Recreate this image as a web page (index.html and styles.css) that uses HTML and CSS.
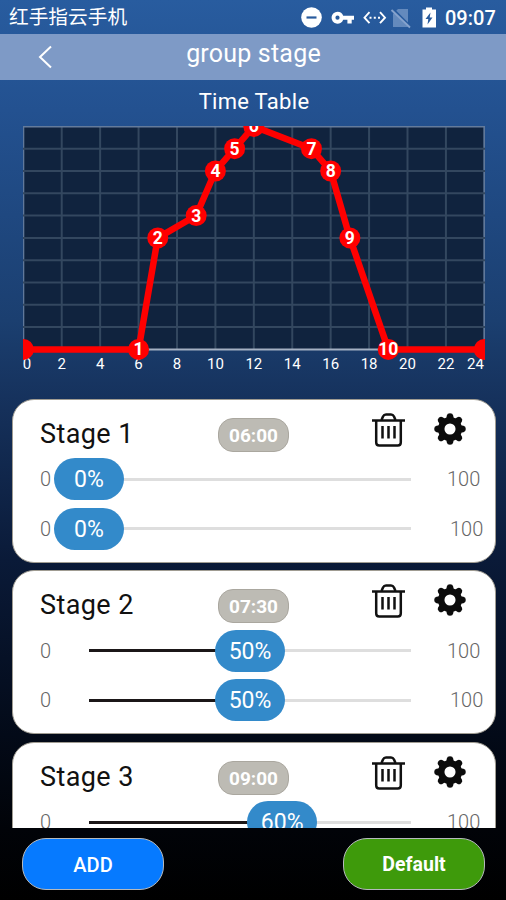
FILE: index.html
```html
<!DOCTYPE html>
<html lang="en">
<head>
  <meta charset="UTF-8">
  <title>group stage</title>
  <link rel="stylesheet" href="styles.css">
</head>
<body>

<div class="status">
  <span class="carrier" lang="zh">红手指云手机</span>
  <svg class="status-icons" width="138" height="24" viewBox="0 0 138 24">
    <circle cx="10.5" cy="11.5" r="10.3" fill="#fff"/>
    <path d="M5.5 11.5h10" stroke="#285b9d" stroke-width="2.2"/>
    <path fill="#fff" fill-rule="evenodd" d="M36.5 5.7a6 6 0 0 1 5.7 4H53v4h-2.3v3.8h-4.3v-3.8h-4.2a6 6 0 1 1-5.7-8zm0 3.9a2.1 2.1 0 1 0 0 4.2a2.1 2.1 0 0 0 0-4.2z"/>
    <path d="M68.5 6.2l-5 5.5 5 5.5M79 6.2l5 5.5-5 5.5" fill="none" stroke="#fff" stroke-width="1.9"/>
    <path d="M68.5 11.7h2M72.8 11.7h2M77 11.7h2" stroke="#fff" stroke-width="2"/>
    <path d="M97 3h10v18H92V8z" fill="#648abd"/>
    <path d="M91 2.5L109 20.5" stroke="#285b9d" stroke-width="3"/>
    <path d="M90.5 4L109 21.5" stroke="#86a3cd" stroke-width="1.9"/>
    <path d="M121.5 3.5h3.5V1.5h6v2h4v18h-13.5z" fill="#fff"/>
    <path d="M129.5 6.5l-5 6.5h2.8l-.8 5.5 5-7h-2.8z" fill="#285b9d"/>
  </svg>
  <span class="clock">09:07</span>
</div>

<header>
  <svg class="back" width="16" height="24" viewBox="0 0 16 24"><path d="M14 1.5L3 12l11 10.5" fill="none" stroke="#fff" stroke-width="2"/></svg>
  <h1>group stage</h1>
</header>

<h2>Time Table</h2>
<svg class="chart" id="chart" width="462" height="250" viewBox="0 0 462 250"></svg>

<div class="list" id="list"></div>

<footer>
  <button class="btn add">ADD</button>
  <button class="btn default">Default</button>
</footer>

<script src="script.js"></script>
</body>
</html>
```
FILE: styles.css
```css
* { box-sizing: border-box; }
body { margin: 0; width: 506px; height: 900px; overflow: hidden; display: flex; flex-direction: column; font-family: Roboto, "Noto Sans CJK SC", sans-serif; color: #fff; background: linear-gradient(#285c9f 0, #235190 110px, #1b3f70 320px, #15305a 410px, #0a1a38 560px, #030a18 735px, #010308 830px, #000 900px); }

.status { flex: none; height: 34px; padding: 2px 11px 0 9px; display: flex; align-items: center; }
.carrier { font-size: 19.7px; line-height: 34px; margin-right: auto; }
.status-icons { margin-right: 6px; }
.clock { font-size: 20px; font-weight: 500; width: 50px; text-align: right; white-space: nowrap; }

header { flex: none; height: 46px; display: grid; grid-template-columns: 60px 1fr 60px; background: #7e9ac6; }
.back { margin: 11px 0 0 37px; }
h1 { margin: 0; font-size: 25px; font-weight: 400; line-height: 39px; letter-spacing: 0.2px; padding-left: 1px; text-align: center; }
h2 { flex: none; height: 46px; margin: 0; font-size: 22px; font-weight: 400; line-height: 43px; letter-spacing: 0.3px; padding-left: 2px; text-align: center; }

.chart { flex: none; margin-left: 23px; }
.chart text { fill: #fff; text-anchor: middle; }
.chart .hour { font-size: 15px; }
.chart .num { font-size: 17.5px; font-weight: 700; }

.list { flex: none; height: 452px; padding: 22.5px 10px 0 11.5px; overflow: hidden; }
.card { height: 164px; margin-bottom: 7.5px; padding: 14px 12px 0 27.5px; border: 1px solid #a09c92; border-radius: 22px; background: #fff; color: #111; }
.card-head { display: flex; height: 41px; }
.card h3 { width: 178px; margin: 0; font-size: 27px; font-weight: 400; line-height: 40px; letter-spacing: 0.4px; }
.time { width: 71px; height: 34px; margin-top: 4px; border: 1px solid #aaa79f; border-radius: 15px; background: #bdbbb4; color: #fff; font-size: 19px; font-weight: 700; line-height: 34px; text-align: center; }
.trash { margin: -1px 0 0 83px; }
.gear { margin: -1px 0 0 29px; }

.row { display: flex; align-items: center; height: 49.5px; color: #666; font-size: 20px; font-weight: 300; }
.min { flex: none; width: 49px; }
.track { flex: none; position: relative; width: 322px; height: 3px; background: #dedede; }
.fill { height: 100%; background: #1b1718; }
.thumb { position: absolute; top: 50%; width: 70px; height: 42px; transform: translate(-50%, -50%); border-radius: 21px; background: #338aca; color: #fff; font-size: 23px; font-weight: 400; line-height: 44px; text-align: center; }
.max { flex: none; margin-left: 36px; }
.row:last-child .max { margin-left: 39px; }

footer { flex: none; height: 72px; padding: 10px 21px 0 22px; display: flex; justify-content: space-between; }
.btn { width: 142px; height: 52px; padding: 1px 0 0; border: 1.5px solid #b5b9bd; border-radius: 24px; color: #fff; font-family: inherit; font-size: 20px; font-weight: 500; }
.add { background: #067aff; }
.default { background: #3e9a0b; font-weight: 700; font-size: 19.5px; }
```
FILE: script.js
```js
const stages = [
  { name: 'Stage 1', time: '06:00', values: [0, 0] },
  { name: 'Stage 2', time: '07:30', values: [50, 50] },
  { name: 'Stage 3', time: '09:00', values: [60, 60] }
];

// [hour, percent]
const points = [[0, 0], [6, 0], [7, 50], [9, 60], [10, 80], [11, 90], [12, 100], [15, 90], [16, 80], [17, 50], [19, 0], [24, 0]];

const px = h => 0.3 + h * 19.21;
const py = v => 223.4 - v * 2.23;

let svg = '<rect x="0" y="0" width="462" height="223" fill="#10233e"/>';
for (let h = 0; h <= 24; h += 2) {
  svg += `<path d="M${px(h)} 0V223" stroke="${h % 24 ? '#33475f' : '#60789a'}" stroke-width="2"/>`;
}
for (let i = 0; i <= 10; i++) {
  const color = i == 0 ? '#a4b0c2' : i == 10 ? '#647b9b' : '#33475f';
  svg += `<path d="M0 ${py(i * 10)}H462" stroke="${color}" stroke-width="2"/>`;
}
for (let h = 0; h <= 24; h += 2) {
  const x = h == 0 ? 4 : h == 24 ? 452.5 : px(h);
  svg += `<text class="hour" x="${x}" y="243">${h}</text>`;
}
svg += `<polyline points="${points.map(p => px(p[0]) + ',' + py(p[1])).join(' ')}" fill="none" stroke="#f00" stroke-width="6.5"/>`;
points.forEach((p, i) => {
  svg += `<circle cx="${px(p[0])}" cy="${py(p[1])}" r="10.5" fill="#f00"/>`;
  if (i > 0 && i < points.length - 1) {
    svg += `<text class="num" x="${px(p[0])}" y="${py(p[1]) + 6}">${i}</text>`;
  }
});
document.getElementById('chart').innerHTML = svg;

const trash = `<svg class="trash" width="33" height="34" viewBox="0 0 33 34" fill="none" stroke="#111">
  <path d="M0 7.5h33" stroke-width="2.5"/>
  <path d="M9.5 7l1.5-3.5Q12 1.5 14 1.5h5q2 0 3 2L23.5 7M4.2 7.5V29.500q0 3 3 3h18.600q3 0 3-3V7.500" stroke-width="2.5"/>
  <path d="M10.5 13v12.500M16.500 13v12.500M22.500 13v12.500" stroke-width="2.5"/>
</svg>`;

const teeth = [0, 45, 90, 135, 180, 225, 270, 315].map(a =>
  `<path d="M12 7L12.8 2.5Q13.2 .2 16 .2T19.2 2.5L20 7z" transform="rotate(${a} 16 16)"/>`).join('');
const gear = `<svg class="gear" width="32" height="32" viewBox="0 0 32 32" fill="#0c0c0c">
  ${teeth}<circle cx="16" cy="16" r="8.8" fill="none" stroke="#0c0c0c" stroke-width="6.5"/>
</svg>`;

const row = v => `
  <div class="row">
    <span class="min">0</span>
    <div class="track">
      <div class="fill" style="width: ${v}%"></div>
      <div class="thumb" style="left: ${v}%">${v}%</div>
    </div>
    <span class="max">100</span>
  </div>`;

document.getElementById('list').innerHTML = stages.map(s => `
  <div class="card">
    <div class="card-head">
      <h3>${s.name}</h3>
      <span class="time">${s.time}</span>
      ${trash}
      ${gear}
    </div>
    ${s.values.map(row).join('')}
  </div>`).join('');
```
